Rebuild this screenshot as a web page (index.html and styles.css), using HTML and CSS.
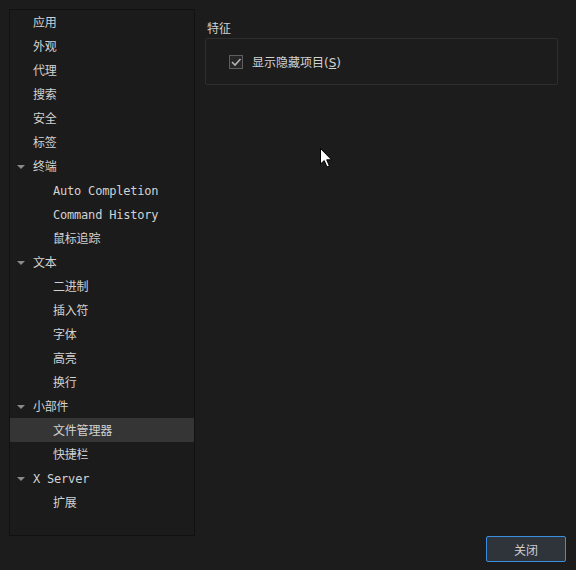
FILE: index.html
```html
<!DOCTYPE html>
<html lang="zh-CN">
<head>
    <meta charset="UTF-8">
    <title>选项</title>
    <link rel="stylesheet" href="styles.css">
</head>
<body>
    <div class="window">
        <div class="main">
            <div class="tree">
                <div class="tree-item">应用</div>
                <div class="tree-item">外观</div>
                <div class="tree-item">代理</div>
                <div class="tree-item">搜索</div>
                <div class="tree-item">安全</div>
                <div class="tree-item">标签</div>
                <div class="tree-item open"><span class="arrow"></span>终端</div>
                <div class="tree-item child">Auto Completion</div>
                <div class="tree-item child">Command History</div>
                <div class="tree-item child">鼠标追踪</div>
                <div class="tree-item open"><span class="arrow"></span>文本</div>
                <div class="tree-item child">二进制</div>
                <div class="tree-item child">插入符</div>
                <div class="tree-item child">字体</div>
                <div class="tree-item child">高亮</div>
                <div class="tree-item child">换行</div>
                <div class="tree-item open"><span class="arrow"></span>小部件</div>
                <div class="tree-item child selected">文件管理器</div>
                <div class="tree-item child">快捷栏</div>
                <div class="tree-item open"><span class="arrow"></span>X Server</div>
                <div class="tree-item child">扩展</div>
            </div>
            <div class="page">
                <div class="group-title">特征</div>
                <div class="group-box">
                    <label class="check">
                        <span class="check-box">
                            <svg width="12" height="12" viewBox="0 0 12 12">
                                <path d="M2 6 L5 9 L10.5 3" fill="none" stroke="#b4b4b4" stroke-width="1.6"/>
                            </svg>
                        </span>
                        <span>显示隐藏项目(<u>S</u>)</span>
                    </label>
                </div>
            </div>
        </div>
        <div class="footer">
            <button class="btn">关闭</button>
        </div>
    </div>

    <!-- mouse pointer -->
    <svg class="pointer" width="13" height="20" viewBox="0 0 13 20">
        <path d="M0.5 0.5 L0.5 16 L4.2 12.6 L7 19 L9.4 18 L6.7 11.8 L11.5 11.8 Z" fill="#fff" stroke="#000" stroke-width="1"/>
    </svg>
</body>
</html>
```

FILE: styles.css
```css
body {
    margin: 0;
    background: #1c1c1c;
    color: #d2d2d2;
    font-family: "DejaVu Sans Mono", "Noto Sans CJK SC", monospace;
    font-size: 12px;
}
.window {
    display: flex;
    flex-direction: column;
    padding: 9px 10px 8px 9px;
}
.main {
    display: flex;
    gap: 10px;
}
.tree {
    flex: none;
    width: 184px;
    height: 525px;
    border: 1px solid #111;
    background: #1b1b1b;
}
.tree-item {
    position: relative;
    box-sizing: border-box;
    height: 24px;
    line-height: 22px;
    padding-top: 2px;
    padding-left: 23px;
    white-space: nowrap;
    letter-spacing: -0.2px;
}
.tree-item.child {
    padding-left: 43px;
}
.tree-item.selected {
    background: #353535;
}
.arrow {
    position: absolute;
    left: 7px;
    top: 11px;
    border-left: 4px solid transparent;
    border-right: 4px solid transparent;
    border-top: 4px solid #8a8a8a;
}
.page {
    flex: 1;
    padding-top: 11px;
}
.group-title {
    line-height: 16px;
    padding-left: 2px;
    margin-bottom: 2px;
    font-family: "Noto Sans CJK SC", sans-serif;
}
.group-box {
    width: 328px;
    height: 45px;
    border: 1px solid #2e2e2e;
    border-radius: 2px;
    display: flex;
    align-items: center;
    padding-left: 23px;
}
.check {
    display: flex;
    align-items: center;
    gap: 9px;
    font-family: "DejaVu Sans", "Noto Sans CJK SC", sans-serif;
}
.check-box {
    width: 12px;
    height: 12px;
    border: 1px solid #5e5e5e;
    background: #262626;
    display: flex;
    align-items: center;
    justify-content: center;
}
.footer {
    display: flex;
    justify-content: flex-end;
}
.btn {
    width: 80px;
    height: 26px;
    background: #2f343a;
    border: 1px solid #3a8ee0;
    border-radius: 2px;
    color: #cfcfcf;
    font-family: "Noto Sans CJK SC", sans-serif;
    font-size: 12px;
}
.pointer {
    position: absolute;
    left: 320px;
    top: 148px;
}
```
